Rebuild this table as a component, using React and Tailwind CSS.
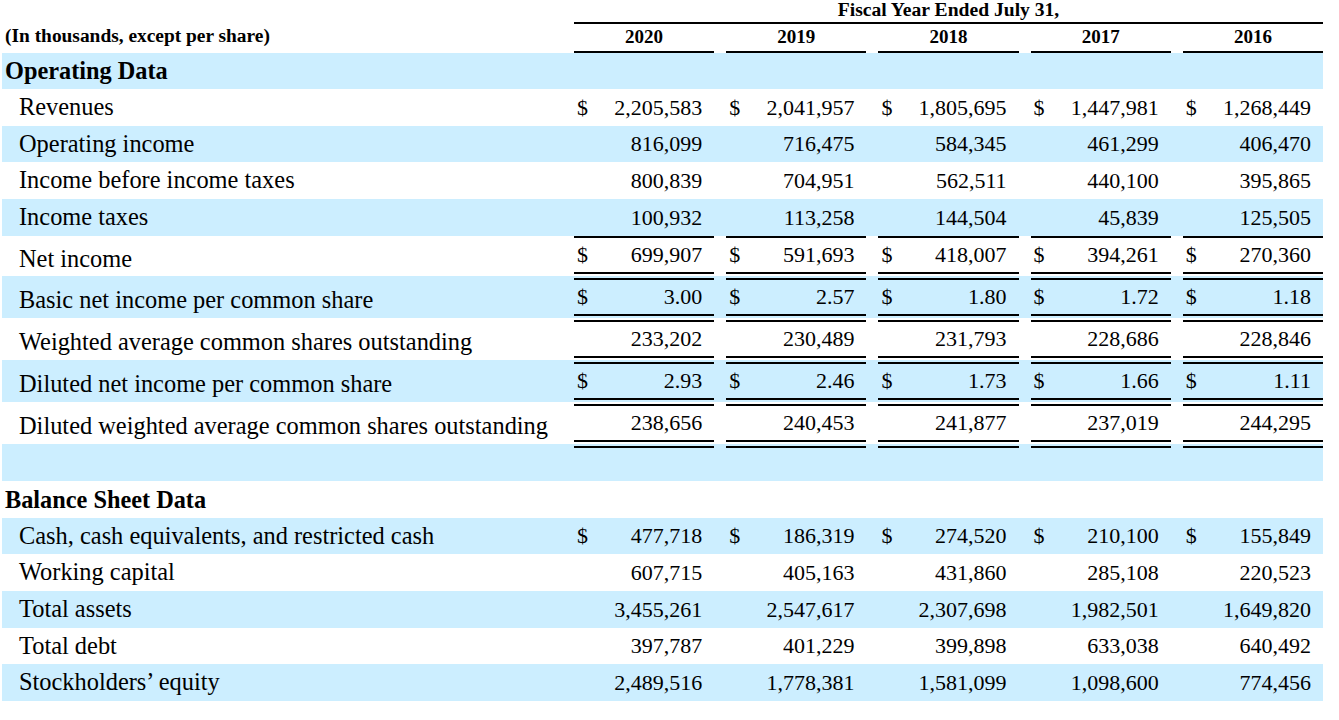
import clsx from "clsx";

const years = ["2020", "2019", "2018", "2017", "2016"];

// filas de la tabla, con altura en px y tipo de borde
const rows = [
  { label: "Operating Data", section: true, bg: true, h: 36 },
  { label: "Revenues", h: 37, dollar: true, values: ["2,205,583", "2,041,957", "1,805,695", "1,447,981", "1,268,449"] },
  { label: "Operating income", bg: true, h: 36, values: ["816,099", "716,475", "584,345", "461,299", "406,470"] },
  { label: "Income before income taxes", h: 37, values: ["800,839", "704,951", "562,511", "440,100", "395,865"] },
  { label: "Income taxes", bg: true, h: 37, values: ["100,932", "113,258", "144,504", "45,839", "125,505"] },
  { label: "Net income", h: 40, dollar: true, top: "single", bottom: true, values: ["699,907", "591,693", "418,007", "394,261", "270,360"] },
  { label: "Basic net income per common share", bg: true, h: 42, dollar: true, top: "double", bottom: true, values: ["3.00", "2.57", "1.80", "1.72", "1.18"] },
  { label: "Weighted average common shares outstanding", h: 42, top: "double", bottom: true, values: ["233,202", "230,489", "231,793", "228,686", "228,846"] },
  { label: "Diluted net income per common share", bg: true, h: 42, dollar: true, top: "double", bottom: true, values: ["2.93", "2.46", "1.73", "1.66", "1.11"] },
  { label: "Diluted weighted average common shares outstanding", h: 42, top: "double", bottom: true, values: ["238,656", "240,453", "241,877", "237,019", "244,295"] },
  { label: "", bg: true, h: 37, top: "double", empty: true },
  { label: "Balance Sheet Data", section: true, h: 37 },
  { label: "Cash, cash equivalents, and restricted cash", bg: true, h: 36, dollar: true, values: ["477,718", "186,319", "274,520", "210,100", "155,849"] },
  { label: "Working capital", h: 37, values: ["607,715", "405,163", "431,860", "285,108", "220,523"] },
  { label: "Total assets", bg: true, h: 37, values: ["3,455,261", "2,547,617", "2,307,698", "1,982,501", "1,649,820"] },
  { label: "Total debt", h: 36, values: ["397,787", "401,229", "399,898", "633,038", "640,492"] },
  { label: "Stockholders’ equity", bg: true, h: 37, values: ["2,489,516", "1,778,381", "1,581,099", "1,098,600", "774,456"] },
];

const Fila = ({ row }) => (
  <div className={clsx("flex", row.bg ? "bg-[#cceeff]" : "bg-white")} style={{ height: row.h }}>
    <div
      className={clsx(
        "w-[560px] shrink-0 flex items-center whitespace-nowrap",
        row.section ? "pl-[3px] font-bold text-[24.3px]" : "pl-[17px] text-[24.4px]",
        row.bottom && "pt-[6px]"
      )}
    >
      {row.label}
    </div>
    {!row.section &&
      years.map((y, i) => (
        <div key={y} className="flex-1 pl-[12px] flex flex-col">
          <div
            className={clsx(
              "flex-1 flex items-center justify-between pl-[3px] pr-[12px] text-[22px] border-black",
              row.top === "single" && "border-t-2",
              row.top === "double" && "mt-[2px] border-t-2",
              row.bottom && "mb-[2px] border-b-2"
            )}
          >
            <span>{row.dollar ? "$" : ""}</span>
            <span>{row.empty ? "" : row.values[i]}</span>
          </div>
        </div>
      ))}
  </div>
);

const App = () => {
  return (
    <div className="w-[1339px] h-[720px] bg-white text-black font-['Liberation_Serif','Times_New_Roman',serif] leading-[1.15]">
      <div className="w-[1321px] ml-[2px]">
        {/* encabezado */}
        <div className="flex h-[24px]">
          <div className="w-[560px] shrink-0"></div>
          <div className="flex-1 ml-[12px] border-b-2 border-black text-center font-bold text-[19.6px] leading-[19px]">
            Fiscal Year Ended July 31,
          </div>
        </div>
        <div className="flex h-[29px]">
          <div className="w-[560px] shrink-0 pl-[3px] pb-[4px] flex items-center font-bold text-[19.4px]">
            (In thousands, except per share)
          </div>
          {years.map((y) => (
            <div key={y} className="flex-1 pl-[12px] flex flex-col">
              <div className="flex-1 flex items-center justify-center pb-[2px] border-b-2 border-black font-bold text-[19px]">
                {y}
              </div>
            </div>
          ))}
        </div>
        {rows.map((row, idx) => (
          <Fila key={idx} row={row} />
        ))}
      </div>
    </div>
  );
};

export default App;
